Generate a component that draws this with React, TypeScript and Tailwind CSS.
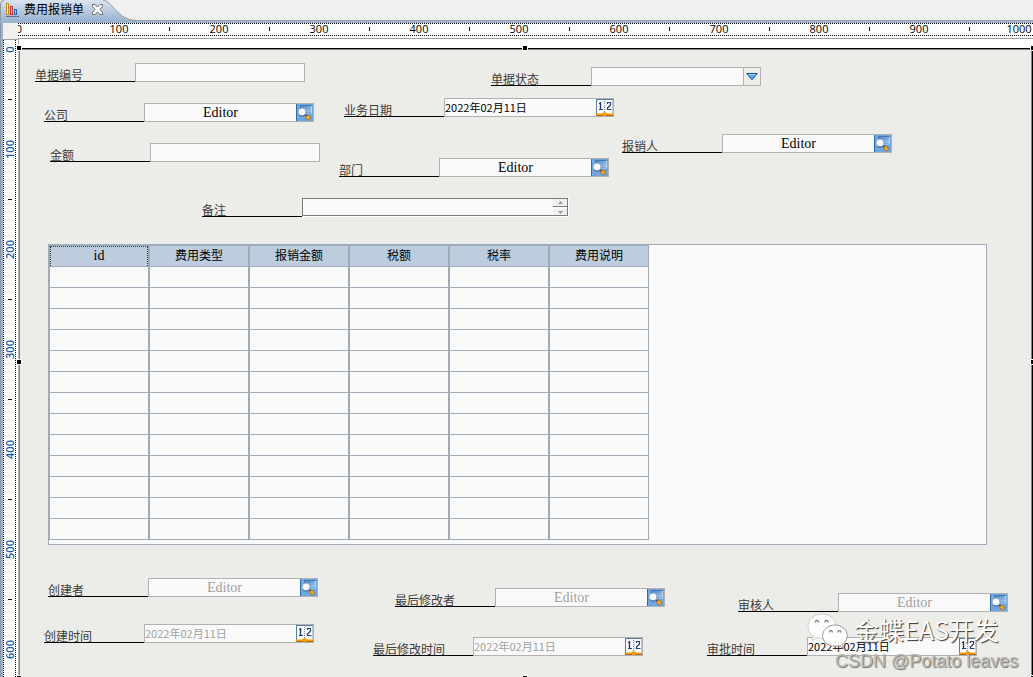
import React from "react";

type Kind = "text" | "select" | "lookup" | "date" | "memo";

interface Field {
  id: string;
  label: string;
  kind: Kind;
  x: number;
  y: number;
  disabled?: boolean;
}

const DATE = "2022年02月11日";

const fields: Field[] = [
  { id: "number", label: "单据编号", kind: "text", x: 15, y: 13 },
  { id: "status", label: "单据状态", kind: "select", x: 471, y: 17 },
  { id: "company", label: "公司", kind: "lookup", x: 24, y: 53 },
  { id: "bizDate", label: "业务日期", kind: "date", x: 324, y: 48 },
  { id: "reporter", label: "报销人", kind: "lookup", x: 602, y: 84 },
  { id: "amount", label: "金额", kind: "text", x: 30, y: 93 },
  { id: "department", label: "部门", kind: "lookup", x: 319, y: 108 },
  { id: "remark", label: "备注", kind: "memo", x: 182, y: 148 },
  { id: "creator", label: "创建者", kind: "lookup", x: 28, y: 528, disabled: true },
  { id: "createTime", label: "创建时间", kind: "date", x: 24, y: 574, disabled: true },
  { id: "modifier", label: "最后修改者", kind: "lookup", x: 375, y: 538, disabled: true },
  { id: "modifyTime", label: "最后修改时间", kind: "date", x: 353, y: 587, disabled: true },
  { id: "auditor", label: "审核人", kind: "lookup", x: 718, y: 543, disabled: true },
  { id: "auditTime", label: "审批时间", kind: "date", x: 687, y: 587 },
];

const columns = ["id", "费用类型", "报销金额", "税额", "税率", "费用说明"];
const rows = Array.from({ length: 13 }, (_, i) => i);

function ChartIcon() {
  return (
    <svg width="14" height="15" viewBox="0 0 14 15" className="shrink-0" aria-hidden="true">
      <rect x="1.5" y="1.5" width="2" height="11" fill="#fdf0a8" stroke="#c08a1e" />
      <rect x="5.5" y="4.5" width="2" height="8" fill="#f6b5b5" stroke="#b8373f" />
      <rect x="9.5" y="7.5" width="2" height="5" fill="#9cc8ee" stroke="#2b64a8" />
      <path d="M1 14.5h13" stroke="#5b6f8c" />
    </svg>
  );
}

function CloseIcon() {
  return (
    <svg width="11" height="11" viewBox="0 0 11 11" aria-hidden="true">
      <path
        d="M.5.5h2.6l2.4 2.6L7.9.5h2.6v2.3L7.9 5.5l2.6 2.7v2.3H7.9L5.5 7.9l-2.4 2.6H.5V8.2l2.6-2.7L.5 2.8z"
        fill="#fff"
        stroke="#6c6c6c"
      />
    </svg>
  );
}

function LookupIcon() {
  return (
    <svg width="17" height="17" viewBox="0 0 17 17" aria-hidden="true">
      <defs>
        <linearGradient id="panel" x1="0" y1="0" x2="1" y2="1">
          <stop offset="0" stopColor="#4a80bd" />
          <stop offset="1" stopColor="#a8cdf0" />
        </linearGradient>
      </defs>
      <rect width="17" height="17" fill="#6fa6df" />
      <path d="M.5 0v17" stroke="#2f6cae" />
      <path d="M4.500 1.500h11v7h-11z" fill="url(#panel)" stroke="#4479b3" />
      <path d="M15.500 2v7h-5" stroke="#b9d7f3" fill="none" />
      <path d="M8.500 10l2.500 2.500" stroke="#3d4654" strokeWidth="1.800" />
      <circle cx="6" cy="8" r="4" fill="#f5f9ff" stroke="#8fadd2" />
      <path d="M2.800 10.700c1.700 1.900 4.700 1.900 6.400 0" stroke="#3f5f8c" fill="none" />
      <path d="M11.500 10.500l3 2.500-.2 1.500-2 1.800-2.800-3z" fill="#f0a726" stroke="#9a6414" strokeWidth=".8" />
    </svg>
  );
}

function CalendarIcon() {
  return (
    <svg width="17" height="17" viewBox="0 0 17 17" aria-hidden="true">
      <rect width="17" height="17" fill="#fbfcfe" />
      <path d="M0 .5h17M.5 0v15" stroke="#5c7d9f" fill="none" />
      <path d="M16.500 1v13" stroke="#b9c6d4" />
      <path d="M8.500 2v12" stroke="#7c8da3" strokeDasharray="1 1" />
      <path d="M9.500 1v12" stroke="#d5dbe4" strokeDasharray="1 1" />
      <path d="M3 4.500h1.500V10M3 10.500h4" stroke="#233a72" fill="none" />
      <path d="M4.500 3v7" stroke="#233a72" strokeWidth="1.400" />
      <path d="M11.500 5V3.500h3V6l-3 3v1.500h4" stroke="#233a72" strokeWidth="1.200" fill="none" />
      <path d="M0 17v-2.500h5.500l3-1.500 3 1.500H17V17z" fill="#f39a0b" />
      <path d="M0 16.500h7M10 16.500h7" stroke="#b86a08" />
      <path d="M2 14.500h4M11 14.500h4" stroke="#ffd070" />
    </svg>
  );
}

function ArrowIcon() {
  return (
    <svg width="12" height="8" viewBox="0 0 12 8" aria-hidden="true">
      <path d="M.8.5h10.400L6 6.800z" fill="#58a6f8" stroke="#1747a6" />
      <path d="M2.500 1.500h7" stroke="#a5d4ff" />
    </svg>
  );
}

function WechatIcon() {
  return (
    <svg width="42" height="36" viewBox="0 0 42 36" className="shrink-0" aria-hidden="true">
      <path
        d="M15 1C7 1 1 6.500 1 13.500c0 4 2 7.300 5.200 9.600L5 27.500l5-2.600c1.600.4 3.200.7 5 .7 8 0 14-5.300 14-12.100S23 1 15 1z"
        fill="#fff"
        fillOpacity=".92"
        stroke="#c4c4c0"
        strokeWidth=".8"
      />
      <path
        d="M28 12c-7 0-12.400 4.800-12.400 10.700S21 33.400 28 33.400c1.500 0 2.900-.2 4.200-.6l4.300 2.300-1.100-3.800c3-2 4.900-5 4.900-8.600C40.300 16.800 35 12 28 12z"
        fill="#fff"
        fillOpacity=".92"
        stroke="#8d8d88"
        strokeWidth=".9"
      />
      <g fill="none" stroke="#777" strokeWidth="1.200">
        <path d="M8.500 9.500v-.6a1.500 1.500 0 0 1 3 0v.6M18 9.500v-.6a1.500 1.500 0 0 1 3 0v.6" />
        <path d="M22.500 19.500V19a1.400 1.400 0 0 1 2.800 0v.5M31 19.500V19a1.400 1.400 0 0 1 2.800 0v.5" />
      </g>
    </svg>
  );
}

function HorizontalRuler() {
  return (
    <div className="min-w-0 flex-1 overflow-x-clip border-b border-[#a0a0a0] bg-white pb-0.5">
      <div className="h-[13px] border-y border-dotted border-black">
        <div className="-ml-[24px] flex h-[9px] items-center">
          {Array.from({ length: 21 }, (_, i) => (
            <div key={i} className="flex w-[50px] shrink-0 justify-center">
              {i % 2 === 0 ? (
                <span className="text-[11px] leading-[11px] text-black">{i * 50}</span>
              ) : (
                <span className="h-1 w-px bg-black" />
              )}
            </div>
          ))}
        </div>
      </div>
    </div>
  );
}

function VerticalRuler() {
  return (
    <div className="relative w-[15px] shrink-0 overflow-hidden border-t border-[#a0a0a0] bg-white pr-0.5">
      <div className="absolute inset-y-0 left-0 w-[13px] overflow-hidden border-x border-dotted border-black">
        <div className="-mt-4 flex w-full flex-col items-center">
          {Array.from({ length: 13 }, (_, i) => (
            <div key={i} className="flex h-[50px] w-full shrink-0 items-center justify-center">
              {i % 2 === 0 ? (
                <span className="-rotate-90 text-[11px] leading-[11px] font-semibold text-[#0a5cb0]">{i * 50}</span>
              ) : (
                <span className="h-px w-1 bg-black" />
              )}
            </div>
          ))}
        </div>
      </div>
    </div>
  );
}

function Control({ field }: { field: Field }) {
  const tone = field.disabled ? "text-[#a0a0a0]" : "text-black";

  if (field.kind === "memo") {
    return (
      <div className="flex w-[267px] border-r border-b border-white">
        <div className="flex min-w-0 flex-1 border border-[#7b7b7b] bg-[#fafafa]">
          <textarea
            id={field.id}
            rows={1}
            className="block h-full min-w-0 flex-1 resize-none overflow-hidden px-1 text-[12px] leading-4 outline-none"
          />
          <div className="flex w-[14px] flex-col justify-between">
            <button
              type="button"
              aria-label="上移"
              className="flex h-2 items-center justify-center border-b border-[#7b7b7b] bg-[#efefed]"
            >
              <svg width="5" height="3" viewBox="0 0 5 3" aria-hidden="true">
                <path d="M0 3h5L2.500 0z" fill="#9a9a9a" />
              </svg>
            </button>
            <button type="button" aria-label="下移" className="flex h-1.5 items-center justify-center bg-[#efefed]">
              <svg width="5" height="3" viewBox="0 0 5 3" aria-hidden="true">
                <path d="M0 0h5L2.500 3z" fill="#9a9a9a" />
              </svg>
            </button>
          </div>
        </div>
      </div>
    );
  }

  return (
    <div className="flex w-[170px] border border-[#b1b1b1] bg-[#fafafa]">
      {field.kind === "text" && (
        <input id={field.id} type="text" className="min-w-0 flex-1 px-1 text-[12px] outline-none" />
      )}
      {field.kind === "select" && (
        <>
          <select id={field.id} className="min-w-0 flex-1 appearance-none px-1 text-[12px] outline-none">
            <option value="" />
          </select>
          <span className="flex w-[17px] items-center justify-center border-l border-[#b1b1b1] bg-[#efede8]">
            <ArrowIcon />
          </span>
        </>
      )}
      {field.kind === "lookup" && (
        <>
          <input
            id={field.id}
            type="text"
            defaultValue="Editor"
            disabled={field.disabled}
            className={`min-w-0 flex-1 text-center font-['Liberation_Serif','Noto_Sans_CJK_SC',serif] text-[14px] leading-4 outline-none ${tone}`}
          />
          <button type="button" aria-label={`选择${field.label}`} className="w-[17px] shrink-0">
            <LookupIcon />
          </button>
        </>
      )}
      {field.kind === "date" && (
        <>
          <input
            id={field.id}
            type="text"
            defaultValue={DATE}
            disabled={field.disabled}
            className={`min-w-0 flex-1 pb-0.5 text-[11px] leading-4 outline-none font-['Noto_Sans_CJK_SC',sans-serif] ${tone}`}
          />
          <button type="button" aria-label={`选择${field.label}`} className="w-[17px] shrink-0">
            <CalendarIcon />
          </button>
        </>
      )}
    </div>
  );
}

function FieldWidget({ field }: { field: Field }) {
  return (
    <div className="absolute flex h-[19px]" style={{ left: field.x, top: field.y }}>
      <label
        htmlFor={field.id}
        className="flex w-[100px] items-end border-b border-black text-[12px] leading-[10px] whitespace-nowrap text-[#3c3c3c]"
      >
        {field.label}
      </label>
      <Control field={field} />
    </div>
  );
}

function EntryGrid() {
  return (
    <div className="absolute top-[194px] left-[28px] h-[301px] w-[939px] border border-[#9fabb7] bg-[#fafafa]">
      <table className="w-[600px] table-fixed border-separate border-spacing-0 text-[12px] leading-4 text-black">
        <thead>
          <tr className="h-[22px]">
            {columns.map((name, i) => (
              <th key={name} className="border border-[#9fabb7] bg-[#bdcddd] p-0 font-normal">
                {i === 0 ? (
                  <div className="h-5 border-x border-t border-dotted border-[#333] font-['Liberation_Serif',serif] text-[14px] leading-[18px]">
                    {name}
                  </div>
                ) : (
                  name
                )}
              </th>
            ))}
          </tr>
        </thead>
        <tbody>
          {rows.map((r) => (
            <tr key={r} className="h-[21px]">
              {columns.map((name) => (
                <td key={name} className="border-x border-b border-[#9fabb7] p-0" />
              ))}
            </tr>
          ))}
        </tbody>
      </table>
    </div>
  );
}

function Handle({ place }: { place: string }) {
  return <span className={`absolute size-1.5 border border-white bg-black ${place}`} />;
}

export default function App() {
  return (
    <div className="flex min-h-screen flex-col overflow-hidden bg-[#f0f0f0] font-['Open_Sans','Noto_Sans_CJK_SC',sans-serif]">
      <header className="relative flex h-[23px] shrink-0 items-start border-b-2 border-[#9ab3d0]">
        <span className="absolute inset-x-0 bottom-0 h-px bg-[#a0a0a0]" />
        <svg width="138" height="21" viewBox="0 0 138 21" className="absolute top-0 left-0" aria-hidden="true">
          <defs>
            <linearGradient id="tab" x1="0" y1="0" x2="0" y2="1">
              <stop offset="0" stopColor="#d9e5f1" />
              <stop offset="1" stopColor="#9ab3d0" />
            </linearGradient>
          </defs>
          <path d="M0 21V4Q0 0 4 0H103C112 0 117 19.500 134 20.500V21z" fill="url(#tab)" />
          <path d="M.5 21V4Q.5 .5 4 .5M103 0C113 2 117 19.500 136 20.500" fill="none" stroke="#8f979f" />
        </svg>
        <div className="relative flex h-[19px] items-center pl-[5px]">
          <ChartIcon />
          <span className="ml-[5px] text-[12px] leading-4 text-black">费用报销单</span>
          <button type="button" aria-label="关闭" className="ml-2">
            <CloseIcon />
          </button>
        </div>
      </header>

      <div className="flex min-h-0 flex-1 flex-col border-l border-[#8c959f]">
        <div className="flex min-h-0 flex-1 flex-col border-l-2 border-[#9ab3d0]">
          <div className="flex h-4 shrink-0">
            <div className="w-[15px] shrink-0 bg-[#f0f0f0]" />
            <HorizontalRuler />
          </div>
          <div className="flex min-h-0 flex-1">
            <VerticalRuler />
            <div className="flex min-w-0 flex-1 flex-col border-l border-[#b4b4b4] bg-white pt-[9px]">
              <main className="relative min-h-[629px] flex-1 border-t border-r border-l border-t-black border-r-black border-l-[#858585] bg-[#ecede8]">
                <div className="absolute inset-0 border-t border-r border-[#858585]">
                  <div className="relative">
                    {fields.map((f) => (
                      <FieldWidget key={f.id} field={f} />
                    ))}
                    <EntryGrid />
                  </div>
                </div>
                <Handle place="-top-1 -left-1" />
                <Handle place="-top-1 left-1/2 -ml-1" />
                <Handle place="-top-1 -right-1" />
                <Handle place="top-1/2 -left-1 -mt-1" />
                <Handle place="top-1/2 -right-1 -mt-1" />
                <Handle place="-bottom-1 -left-1" />
                <Handle place="-bottom-1 left-1/2 -ml-1" />
                <Handle place="-bottom-1 -right-1" />
                <div className="pointer-events-none absolute top-[564px] left-[787px] flex flex-col">
                  <div className="flex items-start gap-[5px]">
                    <WechatIcon />
                    <span className="text-[25px] leading-8 whitespace-nowrap text-white font-['Noto_Sans_CJK_SC',sans-serif] [text-shadow:1px_1px_1px_#333]">
                      金蝶EAS开发
                    </span>
                  </div>
                  <span className="pl-7 text-[18px] leading-6 whitespace-nowrap text-[#b8b8b5] font-['Liberation_Sans',sans-serif] [text-shadow:1px_1px_1px_#707070]">
                    CSDN @Potato leaves
                  </span>
                </div>
              </main>
            </div>
          </div>
        </div>
      </div>
    </div>
  );
}
